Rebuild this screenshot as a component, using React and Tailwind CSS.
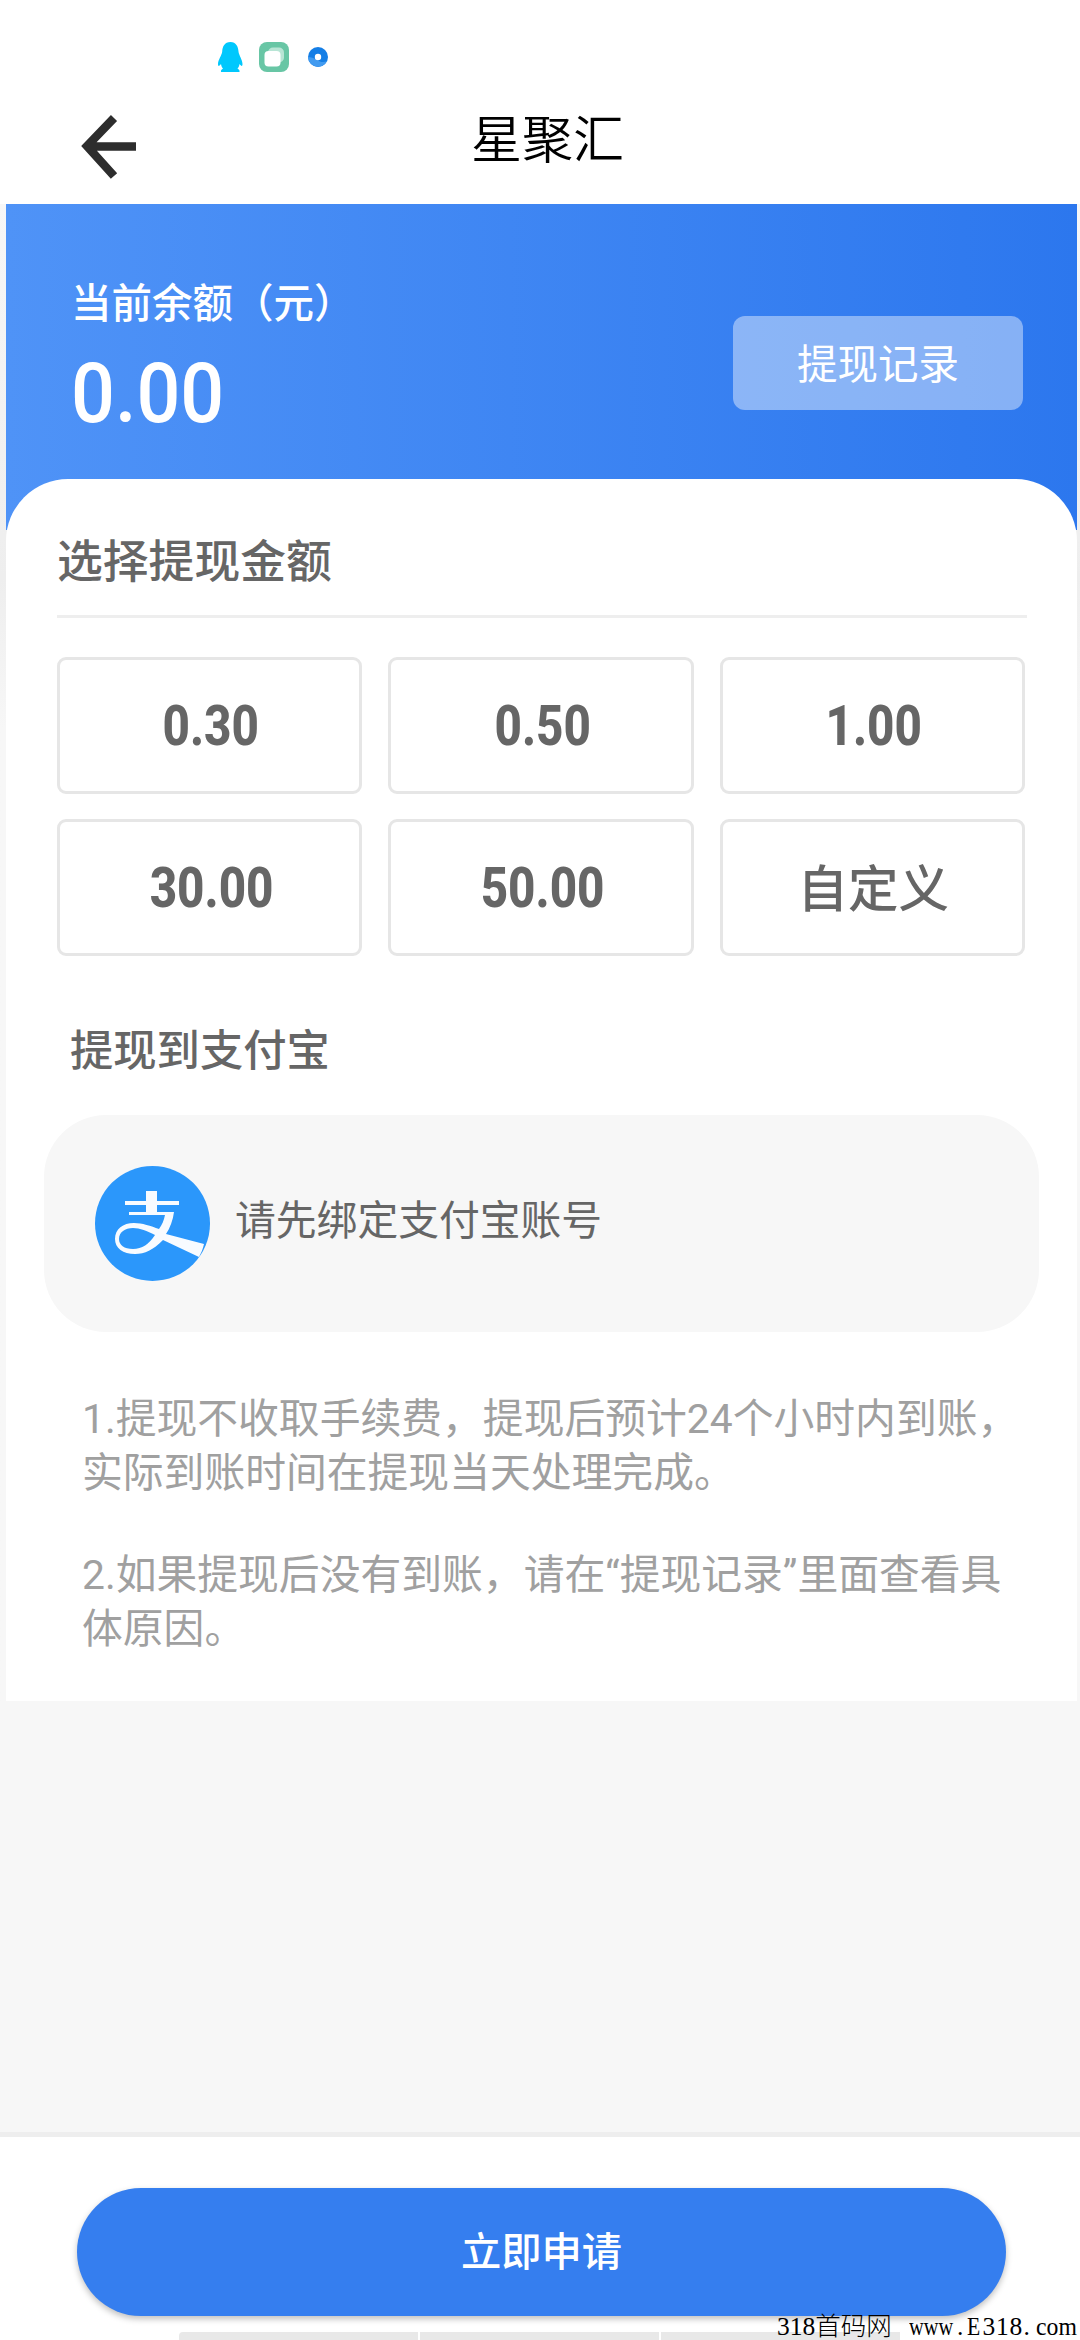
import React from 'react';

const amounts = ['0.30', '0.50', '1.00', '30.00', '50.00'];

const StatusIcons = () => (
  <div className="flex h-[114px] items-center pl-[216px]">
    <svg width="28" height="32" viewBox="0 0 28 32" className="ml-px">
      <path
        d="M13.500 1C7.500 1 5.500 5.500 5.200 10.500C5 14 1 19 1 23c0 3 1.500 2 3 0c.3 2 1 3.500 2 4.800c-1.500.7-2.300 1.500-2 3.200h18.500c.3-1.700-.5-2.500-2-3.200c1-1.300 1.700-2.800 2-4.800c1.500 2 3 3 3 0c0-4-3.700-9-4-12.500C21.200 5.500 19 1 13.500 1z"
        fill="#00c8fd"
      />
    </svg>
    <svg width="30" height="30" viewBox="0 0 30 30" className="ml-[14px]">
      <rect width="30" height="30" rx="8" fill="#68c6a5" />
      <rect x="9" y="5.500" width="16" height="15" rx="5" fill="#b8e5d5" />
      <rect x="5.500" y="9" width="16" height="15.500" rx="4" fill="#fff" />
    </svg>
    <svg width="20" height="20" viewBox="0 0 20 20" className="ml-[19px]">
      <circle cx="10" cy="10" r="10" fill="#147ee6" />
      <path d="M0 10a10 10 0 0 0 19 4C12 18 8 10 0 10z" fill="#429bf0" />
      <circle cx="10" cy="10" r="3.200" fill="#fff" />
    </svg>
  </div>
);

const AlipayLogo = () => (
  <svg width="115" height="115" viewBox="0 0 115 115">
    <circle cx="57.500" cy="57.500" r="57.500" fill="#2b97fb" />
    <path
      d="M51 25h11v10h22v4H62v7h17c-1 8-4 16-8 22l38 10c-1 5-3 9-5 13L68 74C58 84 50 88 40 88C28 88 20 82 20 73C20 63 28 57 39 57c8 0 17 3 25 6c3-4 5-9 6-14H34v-3h17v-7H30v-4h21z"
      fill="#f8fbff"
    />
    <path d="M60 69c-8-4-15-7-22-7c-8 0-14 4-14 11c0 6 5 10 14 10c9 0 16-5 22-14z" fill="#2b97fb" />
  </svg>
);

const App = () => {
  return (
    <main className="flex h-[2340px] w-[1080px] flex-col overflow-hidden bg-[#f7f7f7] font-['Roboto','Noto_Sans_CJK_SC',sans-serif] text-[#666]">
      <header className="h-[204px] bg-white">
        <StatusIcons />
        <div className="flex h-[60px]">
          <svg width="56" height="66" viewBox="0 0 56 66" className="ml-[81px]">
            <path d="M33 4L6 32l27 30M8 32.500h47" fill="none" stroke="#2d2d2d" strokeWidth="8.500" />
          </svg>
          <h1 className="-mt-[3px] ml-[334px] text-[51px] leading-[60px] font-[350] text-black">星聚汇</h1>
        </div>
      </header>

      {/* Balance */}
      <div className="h-[1497px] bg-gradient-to-b from-[#f7f7f7] via-[#eeeeee] via-25% to-[#f7f7f7] to-35% pr-[3px] pl-[6px]">
        <section className="flex h-[326px] justify-between bg-gradient-to-r from-[#4f93f7] to-[#2c77ee] pr-[54px] pl-[66px]">
          <div className="pt-[70px] text-white">
            <p className="-ml-px text-[40.5px] leading-[60px] font-medium">当前余额（元）</p>
            <p className="mt-[15px] -ml-px origin-left scale-x-[0.92] text-[84px] leading-[90px] font-medium">0.00</p>
          </div>
          <button className="mt-[112px] h-[94px] w-[290px] rounded-[12px] bg-white/42 pt-1 text-[40.5px] text-white">
            提现记录
          </button>
        </section>

        <section className="-mt-[51px] h-[1222px] rounded-t-[62px] bg-white pt-[48px]">
          <div className="px-[51px]">
            <h2 className="h-[88px] pt-[2px] text-[45.8px] leading-[68px] font-medium">选择提现金额</h2>
            <div className="h-[3px] w-[970px] bg-[#eeeeee]" />
            <div className="mt-[39px] grid w-[968px] grid-cols-3 gap-x-[26px] gap-y-[25px]">
              {amounts.map((amount) => (
                <button
                  key={amount}
                  className="h-[137px] rounded-[9px] border-[3px] border-[#e6e6e6] pt-px text-[55px] font-extrabold"
                >
                  <span className="ml-[3px] inline-block scale-x-[0.865]">{amount}</span>
                </button>
              ))}
              <button className="h-[137px] rounded-[9px] border-[3px] border-[#e6e6e6] pt-[5px] pl-[2px] text-[50.5px] font-medium">
                自定义
              </button>
            </div>
          </div>

          <h2 className="mt-[63px] ml-[64px] text-[43.3px] leading-[66px] font-medium">提现到支付宝</h2>
          <div className="mt-[30px] ml-[38px] flex h-[217px] w-[995px] items-center rounded-[62px] bg-[#f7f7f7] pl-[51px]">
            <AlipayLogo />
            <span className="-mt-[3px] ml-[25px] text-[40.8px]">请先绑定支付宝账号</span>
          </div>

          <div className="mt-[60px] ml-[76px] w-[990px] text-[40.8px] leading-[54px] text-[#a0a0a0]">
            <p>
              1.提现不收取手续费，提现后预计24个小时内到账，
              <br />
              实际到账时间在提现当天处理完成。
            </p>
            <p className="mt-[48px]">
              2.如果提现后没有到账，请在“提现记录”里面查看具
              <br />
              体原因。
            </p>
          </div>
        </section>
      </div>

      <footer className="relative mt-auto h-[208px] border-t-[5px] border-[#eeeeee] bg-white">
        <button className="mt-[51px] ml-[77px] h-[128px] w-[929px] rounded-full bg-[#357eef] pt-[2px] text-[40.3px] font-medium text-white shadow-[0_3px_6px_rgba(0,0,0,0.25)]">
          立即申请
        </button>
        <div className="mt-[16px] ml-[179px] flex h-[8px] w-[721px] gap-[2px]">
          <div className="flex-1 rounded-tl bg-[#e8e8e8]" />
          <div className="flex-1 bg-[#e8e8e8]" />
          <div className="flex-1 bg-[#e8e8e8]" />
        </div>
        <div className="absolute right-0 bottom-0 flex h-[26px] w-[303px] items-center font-['Liberation_Serif','Noto_Sans_CJK_SC',serif] text-[25.5px] leading-[26px] whitespace-pre text-black">
          <span className="w-[39px]">318</span>
          <span className="w-[79px] font-light">首码网</span>
          <span className="ml-[17px] w-[44px] origin-left scale-x-[0.8]">www</span>
          <span className="w-[14px] text-center">.</span>
          <span className="w-[16px] origin-left scale-x-[0.85]">E</span>
          <span className="w-[42px] tracking-[0.8px]">318</span>
          <span className="w-[13px]">.</span>
          <span className="origin-left scale-x-[0.93]">com</span>
        </div>
      </footer>
    </main>
  );
};

export default App;
